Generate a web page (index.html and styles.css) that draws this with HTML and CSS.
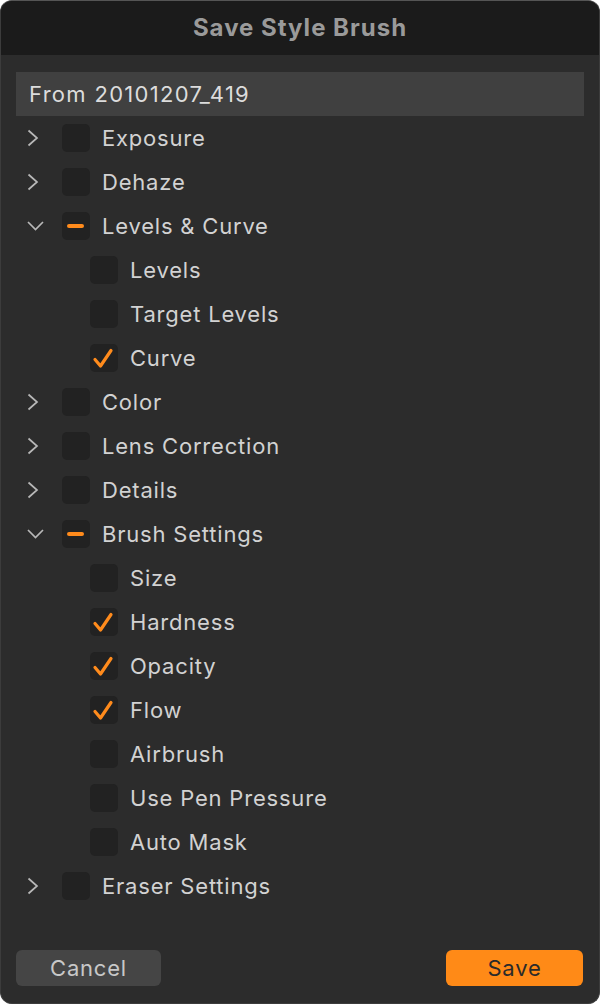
FILE: index.html
```html
<!DOCTYPE html>
<html>
<head>
<meta charset="utf-8">
<link rel="stylesheet" href="styles.css">
</head>
<body>
<div class="window">
  <div class="titlebar">Save Style Brush</div>
  <div class="content">
    <div class="field">From 20101207_419</div>
    <div class="tree">
      <div class="row"><span class="chev"><svg width="17" height="18" viewBox="0 0 17 18"><path d="M1.5 1.5 L10 9 L1.5 16.5" /></svg></span><span class="box"></span><span class="label">Exposure</span></div>
      <div class="row"><span class="chev"><svg width="17" height="18" viewBox="0 0 17 18"><path d="M1.5 1.5 L10 9 L1.5 16.5" /></svg></span><span class="box"></span><span class="label">Dehaze</span></div>
      <div class="row"><span class="chev"><svg width="17" height="18" viewBox="0 0 17 18"><path d="M1 5 L8.5 12.5 L16 5" /></svg></span><span class="box"><svg width="28" height="28" viewBox="0 0 28 28"><rect class="dash" x="5" y="12" width="17" height="4" rx="2"/></svg></span><span class="label">Levels &amp; Curve</span></div>
      <div class="row child"><span class="box"></span><span class="label">Levels</span></div>
      <div class="row child"><span class="box"></span><span class="label">Target Levels</span></div>
      <div class="row child"><span class="box"><svg width="28" height="28" viewBox="0 0 28 28"><path class="tick" d="M5 15.5 L10.5 22 L21 6.5"/></svg></span><span class="label">Curve</span></div>
      <div class="row"><span class="chev"><svg width="17" height="18" viewBox="0 0 17 18"><path d="M1.5 1.5 L10 9 L1.5 16.5" /></svg></span><span class="box"></span><span class="label">Color</span></div>
      <div class="row"><span class="chev"><svg width="17" height="18" viewBox="0 0 17 18"><path d="M1.5 1.5 L10 9 L1.5 16.5" /></svg></span><span class="box"></span><span class="label">Lens Correction</span></div>
      <div class="row"><span class="chev"><svg width="17" height="18" viewBox="0 0 17 18"><path d="M1.5 1.5 L10 9 L1.5 16.5" /></svg></span><span class="box"></span><span class="label">Details</span></div>
      <div class="row"><span class="chev"><svg width="17" height="18" viewBox="0 0 17 18"><path d="M1 5 L8.5 12.5 L16 5" /></svg></span><span class="box"><svg width="28" height="28" viewBox="0 0 28 28"><rect class="dash" x="5" y="12" width="17" height="4" rx="2"/></svg></span><span class="label">Brush Settings</span></div>
      <div class="row child"><span class="box"></span><span class="label">Size</span></div>
      <div class="row child"><span class="box"><svg width="28" height="28" viewBox="0 0 28 28"><path class="tick" d="M5 15.5 L10.5 22 L21 6.5"/></svg></span><span class="label">Hardness</span></div>
      <div class="row child"><span class="box"><svg width="28" height="28" viewBox="0 0 28 28"><path class="tick" d="M5 15.5 L10.5 22 L21 6.5"/></svg></span><span class="label">Opacity</span></div>
      <div class="row child"><span class="box"><svg width="28" height="28" viewBox="0 0 28 28"><path class="tick" d="M5 15.5 L10.5 22 L21 6.5"/></svg></span><span class="label">Flow</span></div>
      <div class="row child"><span class="box"></span><span class="label">Airbrush</span></div>
      <div class="row child"><span class="box"></span><span class="label">Use Pen Pressure</span></div>
      <div class="row child"><span class="box"></span><span class="label">Auto Mask</span></div>
      <div class="row"><span class="chev"><svg width="17" height="18" viewBox="0 0 17 18"><path d="M1.5 1.5 L10 9 L1.5 16.5" /></svg></span><span class="box"></span><span class="label">Eraser Settings</span></div>
    </div>
  </div>
  <div class="footer">
    <button class="btn cancel">Cancel</button>
    <button class="btn save">Save</button>
  </div>
</div>
</body>
</html>
```

FILE: styles.css
```css
html, body {
  margin: 0;
  padding: 0;
  background: #ffffff;
}
body {
  font-family: Inter, "Noto Sans", "Liberation Sans", sans-serif;
}
.window {
  width: 600px;
  height: 1004px;
  box-sizing: border-box;
  border-radius: 12px;
  background: #2c2c2c;
  display: flex;
  flex-direction: column;
  overflow: hidden;
  border: 1px solid #3c3c3c;
  border-top-color: #555555;
}
.titlebar {
  height: 54px;
  background: #1b1b1b;
  display: flex;
  align-items: center;
  justify-content: center;
  color: #9a9a9a;
  font-weight: 700;
  font-size: 24px;
  letter-spacing: 1px;
  padding-bottom: 2px;
  box-sizing: border-box;
}
.content {
  padding: 17px 15px 0 15px;
}
.field {
  height: 44px;
  background: #404040;
  color: #dcdcdc;
  font-size: 22px;
  line-height: 44px;
  padding-left: 13px;
  letter-spacing: 1.3px;
}
.tree {
  display: flex;
  flex-direction: column;
}
.row {
  height: 44px;
  display: flex;
  align-items: center;
  color: #d2d2d2;
  font-size: 22px;
  letter-spacing: 0.8px;
}
.chev {
  width: 17px;
  height: 18px;
  margin-left: 11px;
  margin-right: 18px;
  display: flex;
}
.chev svg path {
  fill: none;
  stroke: #b8b8b8;
  stroke-width: 1.7;
}
.row.child {
  padding-left: 74px;
}
.box {
  width: 28px;
  height: 28px;
  border-radius: 5px;
  background: #222222;
  flex: none;
  display: flex;
}
.dash {
  fill: #ff8b1c;
}
.tick {
  fill: none;
  stroke: #ff8b1c;
  stroke-width: 3.2;
  stroke-linecap: round;
  stroke-linejoin: round;
}
.label {
  margin-left: 12px;
}
.footer {
  margin-top: auto;
  display: flex;
  justify-content: space-between;
  padding: 0 16px 17px 15px;
}
.btn {
  height: 36px;
  border: none;
  border-radius: 6px;
  font-family: Inter, "Noto Sans", "Liberation Sans", sans-serif;
  font-size: 22px;
  letter-spacing: 0.8px;
  padding: 0;
}
.cancel {
  width: 145px;
  background: #454545;
  color: #c8c8c8;
}
.save {
  width: 137px;
  background: #ff8a17;
  color: #2a2a2a;
}
```
